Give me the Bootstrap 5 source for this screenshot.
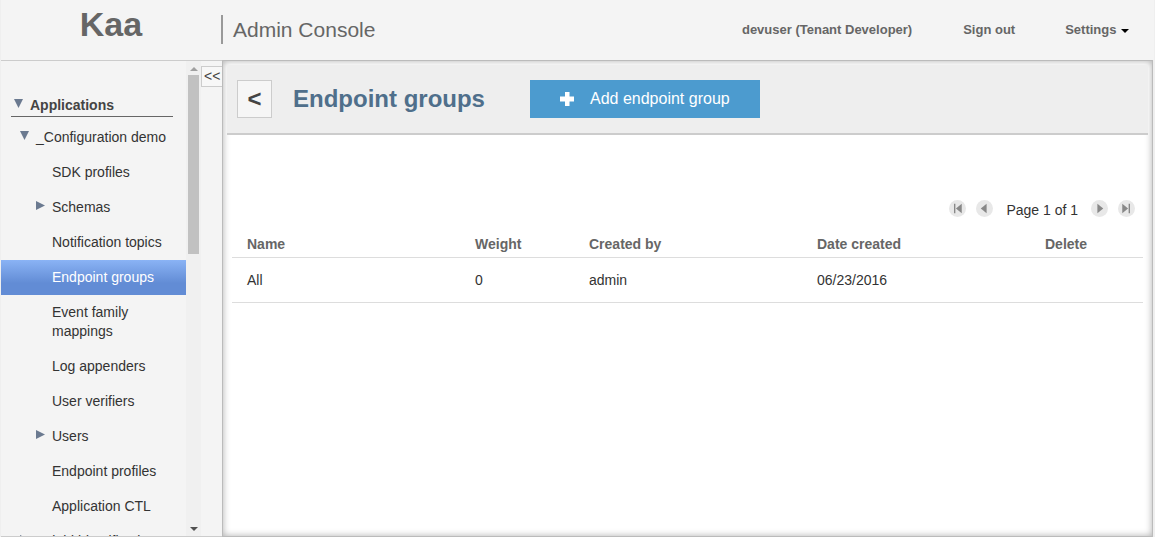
<!DOCTYPE html>
<html lang="en">
<head>
<meta charset="utf-8">
<meta name="viewport" content="width=device-width, initial-scale=1">
<title>Kaa Admin Console</title>
<link href="https://cdn.jsdelivr.net/npm/bootstrap@5.3.0/dist/css/bootstrap.min.css" rel="stylesheet">
<style>
body{font-family:"Liberation Sans",Arial,sans-serif;font-size:14px;line-height:19px;color:#333;background:#efefef}
.app{height:100vh;padding:0 1px}
.topbar{height:60px;background:#f4f4f4;color:#666;flex:none}
.brand{width:220px;font-size:34px;line-height:48px}
.brand-title{height:29px;margin-top:15px;border-left:2px solid #999;padding-left:10px;font-size:21px;line-height:30px}
.top-nav{padding:0 25.5px 2px 0}
.top-link{font-size:13px;font-weight:700;color:#666;text-decoration:none}
.sidebar{width:221px;background:#f4f4f4;border-top:1px solid #ccc;border-bottom:1px solid #ccc;flex:none}
.tree{width:185px;padding-top:35px}
.tree-root{margin:0 13px 3px 10px;height:21px;border-bottom:1px solid #666;font-weight:700;color:#444;padding-left:3px}
.tree-item{padding:8px 16px 8px 51px;color:#333}
.tree-item.app-node{padding-left:19px;padding-right:0;white-space:nowrap}
.tree-item.parent{padding-left:35px}
.tree-item.selected{background:linear-gradient(#8ab3f5,#628cd5 66%,#628cd5);color:#fff}
.tri{width:9px;height:9px;flex:none;margin-top:3px;margin-right:7px;fill:#6b7a90}
.track{width:15px;background:#f0f0f0;padding:0 2px}
.thumb{height:179px;background:#c1c1c1;width:11px}
.collapse-btn{width:21px;height:21px;margin-top:5px;border:1px solid #ccc;border-right:0;background:#f7f7f7;color:#444;line-height:18px;padding:0 0 0 2px}
.panel{background:#fff;border:1px solid #bbb;box-shadow:inset 0 0 7px rgba(0,0,0,.32);padding:4px;margin-right:1px}
.title-bar{height:70px;background:#eee;border-bottom:2px solid #ccc;padding:0 10px}
.back-btn{width:35px;height:38px;border:1px solid #ccc;background:#f6f6f6;color:#444;font-size:24px;font-weight:700;line-height:34px;padding:0}
.page-title{font-size:24px;line-height:30px;font-weight:700;color:#4f6f8b;width:237px;margin-left:21px}
.add-btn{width:230px;height:38px;background:#4c9bcf;color:#fff;font-size:16px;border:0;padding:0 0 0 30px;border-radius:0}
.pager-row{padding:65px 13px 0 0;height:89px;line-height:19px}
.pg{width:17px;height:17px}
.grid-table{margin:0 5px;width:911px;table-layout:fixed}
.grid-table th,.grid-table td{padding:0 15px;border-bottom:1px solid #ddd}
.grid-table th{height:33px;color:#666;padding-top:8px}
.grid-table td{height:45px;padding-top:1px}
</style>
</head>
<body>
<div class="app d-flex flex-column overflow-hidden">
  <header class="topbar d-flex">
    <div class="brand text-center fw-bold">Kaa</div>
    <div class="brand-title">Admin Console</div>
    <nav class="top-nav ms-auto d-flex align-items-center">
      <a class="top-link" href="#">devuser (Tenant Developer)</a>
      <a class="top-link" href="#" style="margin-left:51px">Sign out</a>
      <a class="top-link d-flex align-items-center" href="#" style="margin-left:50px">Settings<svg width="8" height="4" class="ms-1 mt-1" viewBox="0 0 8 4"><path d="M0 0h8L4 4z" fill="#000"/></svg></a>
    </nav>
  </header>
  <div class="d-flex flex-fill" style="min-height:0">
    <aside class="sidebar d-flex overflow-hidden">
      <div class="tree flex-shrink-0">
        <div class="tree-root d-flex"><svg class="tri" viewBox="0 0 9 9"><path d="M0 0h9L4.5 9z"/></svg>Applications</div>
        <div class="tree-item app-node d-flex"><svg class="tri" viewBox="0 0 9 9"><path d="M0 0h9L4.5 9z"/></svg>_Configuration demo</div>
        <div class="tree-item">SDK profiles</div>
        <div class="tree-item parent d-flex"><svg class="tri" viewBox="0 0 9 9"><path d="M0 0l9 4.5L0 9z"/></svg>Schemas</div>
        <div class="tree-item">Notification topics</div>
        <div class="tree-item selected">Endpoint groups</div>
        <div class="tree-item">Event family mappings</div>
        <div class="tree-item">Log appenders</div>
        <div class="tree-item">User verifiers</div>
        <div class="tree-item parent d-flex"><svg class="tri" viewBox="0 0 9 9"><path d="M0 0l9 4.5L0 9z"/></svg>Users</div>
        <div class="tree-item">Endpoint profiles</div>
        <div class="tree-item">Application CTL</div>
        <div class="tree-item app-node d-flex"><svg class="tri" viewBox="0 0 9 9"><path d="M0 0l9 4.5L0 9z"/></svg>_Field identification</div>
      </div>
      <div class="track d-flex flex-column align-items-center flex-shrink-0">
        <svg width="8" height="14" viewBox="0 0 8 14" class="flex-shrink-0"><path d="M0 10L4 6l4 4z" fill="#a0a0a0"/></svg>
        <div class="thumb flex-shrink-0"></div>
        <svg width="8" height="12" viewBox="0 0 8 12" class="mt-auto flex-shrink-0"><path d="M0 3h8L4 7z" fill="#505050"/></svg>
      </div>
      <div class="collapse-btn">&lt;&lt;</div>
    </aside>
    <main class="panel flex-fill">
      <div class="title-bar d-flex align-items-center">
        <button class="back-btn">&lt;</button>
        <h1 class="page-title mb-0">Endpoint groups</h1>
        <button class="add-btn d-flex align-items-center"><svg width="14" height="14" viewBox="0 0 14 14" style="margin-right:16px"><path d="M5 0h4.500v4.500H14v5H9.500V14H5V9.500H0v-5h5z" fill="#fff"/></svg><span class="lh-1">Add endpoint group</span></button>
      </div>
      <div class="pager-row d-flex justify-content-end">
        <svg class="pg" viewBox="0 0 16 16"><circle cx="8" cy="8" r="8" fill="#e8e8e8"/><path d="M4.700 3.500H6v9H4.700zM12 3.500v9L6.500 8z" fill="#888"/></svg>
        <svg class="pg" viewBox="0 0 16 16" style="margin-left:10px"><circle cx="8" cy="8" r="8" fill="#e8e8e8"/><path d="M10 3.500v9L4.500 8z" fill="#888"/></svg>
        <span style="margin:1px 13px 0 13px">Page 1 of 1</span>
        <svg class="pg" viewBox="0 0 16 16"><circle cx="8" cy="8" r="8" fill="#e8e8e8"/><path d="M6 3.500v9L11.500 8z" fill="#888"/></svg>
        <svg class="pg" viewBox="0 0 16 16" style="margin-left:10px"><circle cx="8" cy="8" r="8" fill="#e8e8e8"/><path d="M4 3.500v9L9.500 8zM10 3.500h1.300v9H10z" fill="#888"/></svg>
      </div>
      <table class="grid-table">
        <colgroup><col width="228"><col width="114"><col width="228"><col width="228"><col width="113"></colgroup>
        <thead><tr><th>Name</th><th>Weight</th><th>Created by</th><th>Date created</th><th>Delete</th></tr></thead>
        <tbody><tr><td>All</td><td>0</td><td>admin</td><td>06/23/2016</td><td></td></tr></tbody>
      </table>
    </main>
  </div>
</div>
<script src="https://cdn.jsdelivr.net/npm/bootstrap@5.3.0/dist/js/bootstrap.bundle.min.js"></script>
</body>
</html>
